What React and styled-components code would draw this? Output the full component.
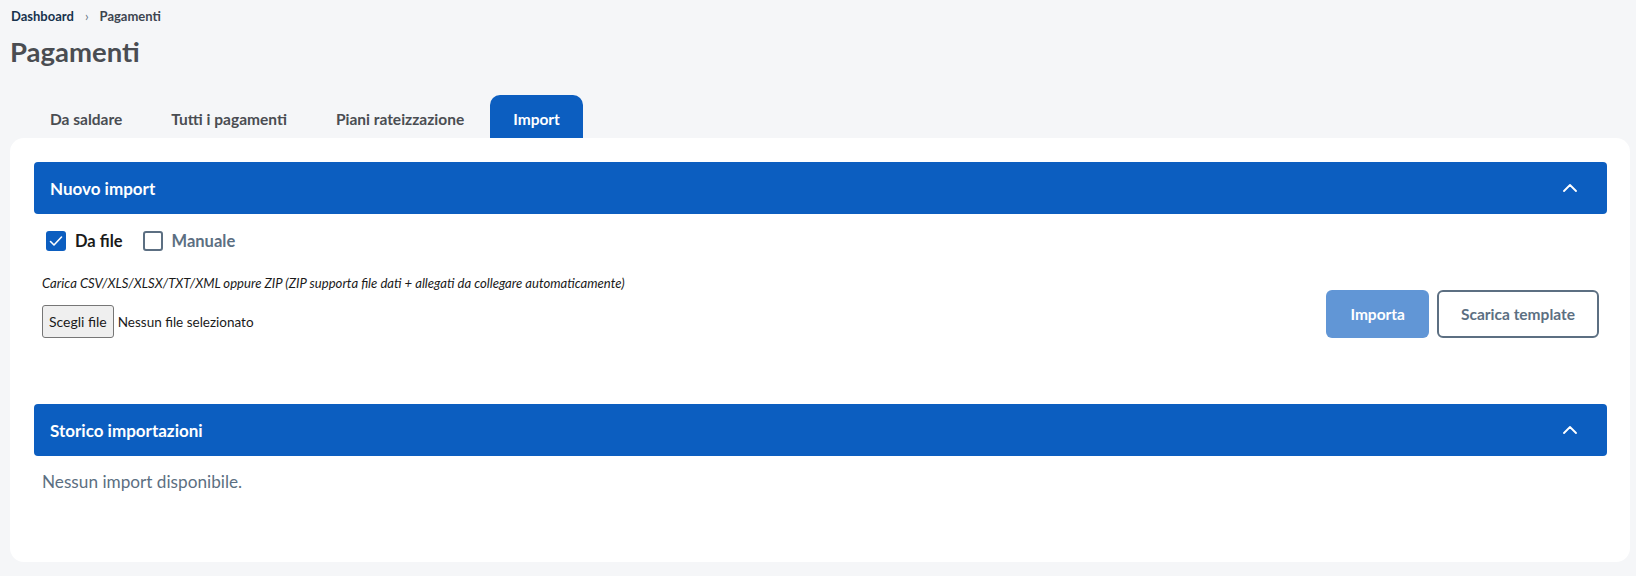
import React from 'react';
import styled, { createGlobalStyle } from 'styled-components';

const colors = {
  bg: '#f5f6f8',
  primary: '#0c5ec0',
  primaryDisabled: '#6196d6',
  slate: '#5c6f82',
  navy: '#17324d',
  text: '#1a1a1a',
  gray: '#4a4d52',
};

const GlobalStyle = createGlobalStyle`
  * { box-sizing: border-box; }
  body {
    margin: 0;
    background: ${colors.bg};
    font-family: Lato, "Open Sans", "Noto Sans", sans-serif;
    color: ${colors.text};
  }
`;

const Page = styled.div`
  padding: 6px 6px 13px 10px;
`;

const Breadcrumb = styled.nav`
  display: flex;
  align-items: center;
  gap: 11px;
  font-size: 13px;
  font-weight: 700;
  line-height: 20px;
  padding-left: 1px;
`;

const Crumb = styled.span`
  color: ${(p) => (p.$current ? '#3d4550' : colors.navy)};
`;

const Separator = styled.span`
  color: #6b7785;
  font-weight: 400;
  font-size: 13px;
`;

const Title = styled.h1`
  margin: 9px 0 0;
  font-size: 27.5px;
  line-height: 34px;
  font-weight: 700;
  color: ${colors.gray};
`;

const TabList = styled.div`
  display: flex;
  gap: 3px;
  margin-top: 26px;
  padding-left: 17px;
`;

const Tab = styled.button`
  border: none;
  font-family: inherit;
  font-size: 15.5px;
  font-weight: 700;
  line-height: 24px;
  padding: 12px 23px 7px;
  border-radius: 10px 10px 0 0;
  background: ${(p) => (p.$active ? colors.primary : 'transparent')};
  color: ${(p) => (p.$active ? '#fff' : colors.gray)};
  cursor: pointer;
`;

const Card = styled.div`
  background: #fff;
  border-radius: 14px;
  padding: 24px 23px 24px 24px;
`;

const SectionHeader = styled.div`
  display: flex;
  align-items: center;
  justify-content: space-between;
  height: 52px;
  padding: 0 30px 0 16px;
  background: ${colors.primary};
  border-radius: 4px;
  color: #fff;
  margin-top: ${(p) => p.$gap || 0}px;
`;

const SectionTitle = styled.h2`
  margin: 0;
  font-size: 17px;
  font-weight: 700;
`;

const SectionBody = styled.div`
  padding: ${(p) => p.$pad || '17px 8px 0'};
`;

const CheckRow = styled.div`
  display: flex;
  align-items: center;
  gap: 20px;
  padding-left: 4px;
`;

const CheckItem = styled.label`
  display: flex;
  align-items: center;
  gap: 9px;
  font-size: 16.5px;
  font-weight: 700;
  line-height: 20px;
  color: ${(p) => (p.$checked ? colors.text : colors.slate)};
`;

const Box = styled.span`
  width: 20px;
  height: 20px;
  border-radius: 3px;
  display: flex;
  align-items: center;
  justify-content: center;
  background: ${(p) => (p.$checked ? colors.primary : '#fff')};
  border: ${(p) => (p.$checked ? 'none' : `2px solid ${colors.slate}`)};
`;

const ImportRow = styled.div`
  display: flex;
  justify-content: space-between;
  align-items: flex-end;
  margin-top: 23px;
`;

const Hint = styled.p`
  margin: 0 0 13px;
  font-size: 13.1px;
  line-height: 18px;
  font-style: italic;
`;

const FileField = styled.div`
  display: flex;
  align-items: center;
  gap: 4px;
  font-size: 13.5px;
`;

const FileButton = styled.button`
  height: 33px;
  padding: 0 6px;
  font-family: inherit;
  font-size: 14px;
  color: ${colors.text};
  background: #efefef;
  border: 1px solid #767676;
  border-radius: 3px;
`;

const Actions = styled.div`
  display: flex;
  gap: 8px;
`;

const ActionButton = styled.button`
  height: 48px;
  padding: 0 ${(p) => (p.$outline ? 22 : 24)}px;
  font-family: inherit;
  font-size: 15.5px;
  font-weight: 700;
  border-radius: 6px;
  background: ${(p) => (p.$outline ? '#fff' : colors.primaryDisabled)};
  color: ${(p) => (p.$outline ? colors.slate : '#fff')};
  border: ${(p) => (p.$outline ? `2px solid ${colors.slate}` : 'none')};
`;

const Empty = styled.p`
  margin: 0;
  font-size: 17.2px;
  line-height: 26px;
  color: ${colors.slate};
`;

const ChevronUp = () => (
  <svg width="14" height="8" viewBox="0 0 14 8" fill="none">
    <polyline points="1,7 7,1 13,7" stroke="#fff" strokeWidth="1.8" strokeLinecap="round" strokeLinejoin="round" />
  </svg>
);

const Check = () => (
  <svg width="14" height="12" viewBox="0 0 14 12" fill="none">
    <polyline points="1.5,6.5 5,10 12.5,2" stroke="#fff" strokeWidth="1.6" strokeLinecap="round" strokeLinejoin="round" />
  </svg>
);

const Checkbox = ({ checked, label }) => (
  <CheckItem $checked={checked}>
    <Box $checked={checked}>{checked && <Check />}</Box>
    {label}
  </CheckItem>
);

const tabs = ['Da saldare', 'Tutti i pagamenti', 'Piani rateizzazione', 'Import'];

export default function App() {
  return (
    <>
      <GlobalStyle />
      <Page>
        <Breadcrumb>
          <Crumb>Dashboard</Crumb>
          <Separator>›</Separator>
          <Crumb $current>Pagamenti</Crumb>
        </Breadcrumb>
        <Title>Pagamenti</Title>
        <TabList>
          {tabs.map((t) => (
            <Tab key={t} $active={t === 'Import'}>{t}</Tab>
          ))}
        </TabList>
        <Card>
          <SectionHeader>
            <SectionTitle>Nuovo import</SectionTitle>
            <ChevronUp />
          </SectionHeader>
          <SectionBody>
            <CheckRow>
              <Checkbox checked label="Da file" />
              <Checkbox label="Manuale" />
            </CheckRow>
            <ImportRow>
              <div>
                <Hint>
                  Carica CSV/XLS/XLSX/TXT/XML oppure ZIP (ZIP supporta file dati + allegati da collegare automaticamente)
                </Hint>
                <FileField>
                  <FileButton>Scegli file</FileButton>
                  <span>Nessun file selezionato</span>
                </FileField>
              </div>
              <Actions>
                <ActionButton>Importa</ActionButton>
                <ActionButton $outline>Scarica template</ActionButton>
              </Actions>
            </ImportRow>
          </SectionBody>
          <SectionHeader $gap={66}>
            <SectionTitle>Storico importazioni</SectionTitle>
            <ChevronUp />
          </SectionHeader>
          <SectionBody $pad="13px 8px 43px">
            <Empty>Nessun import disponibile.</Empty>
          </SectionBody>
        </Card>
      </Page>
    </>
  );
}
